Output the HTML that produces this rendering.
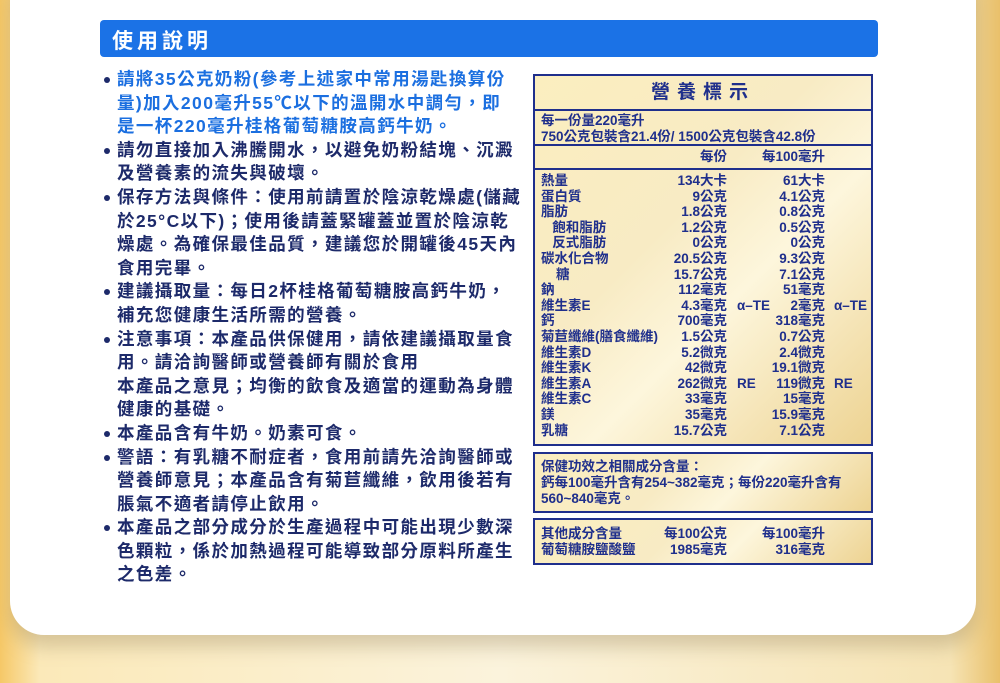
<!DOCTYPE html>
<html><head><meta charset="utf-8"><style>
*{margin:0;padding:0;box-sizing:border-box}
body{width:1000px;height:683px;overflow:hidden;position:relative;font-family:"Liberation Sans","Noto Sans CJK TC",sans-serif;
background:linear-gradient(90deg,#f6c867 0%,#fbe9b9 4%,#fbf3dc 50%,#f6e4b5 95%,#e9c06a 100%)}
.card{position:absolute;left:10px;top:-40px;width:966px;height:675px;background:#fff;border-radius:34px;box-shadow:0 12px 18px rgba(150,130,90,.35)}
.bar{position:absolute;left:100px;top:20px;width:778px;height:37px;background:#1b72e6;border-radius:4px;color:#fff;font-size:21px;font-weight:bold;letter-spacing:4px;padding:5px 0 0 12px}
.txt{position:absolute;left:100px;top:68px;font-size:17.5px;line-height:23.6px;color:#1d2a6a;white-space:nowrap;font-weight:bold;letter-spacing:1.4px}
.txt div{padding-left:17px;position:relative}
.txt div.b:before{content:"";position:absolute;left:4px;top:9px;width:6px;height:6px;border-radius:50%;background:#1d2a6a}
.txt .blue{color:#1b6fe0}
.box{position:absolute;left:533px;width:340px;border:2px solid #1f2f8c;background:linear-gradient(135deg,#fbeebf 0%,#f8ebc4 40%,#fdf6dc 60%,#edd392 100%);color:#1f2f8c;font-weight:bold;font-size:13.5px}
.sec{border-bottom:2px solid #1f2f8c;position:relative}
.r{position:relative;height:15.6px;line-height:15.6px}
.r span{position:absolute;top:0}
.l{left:6px}.a{right:144px;text-align:right}.c{right:46px;text-align:right}
.ua{left:202px}.uc{left:299px}
</style></head><body>
<div class="card"></div>
<div class="bar">使用說明</div>
<div class="txt">
<div class="b blue">請將35公克奶粉(參考上述家中常用湯匙換算份</div>
<div class="blue">量)加入200毫升55℃以下的溫開水中調勻，即</div>
<div class="blue">是一杯220毫升桂格葡萄糖胺高鈣牛奶。</div>
<div class="b">請勿直接加入沸騰開水，以避免奶粉結塊、沉澱</div>
<div>及營養素的流失與破壞。</div>
<div class="b">保存方法與條件：使用前請置於陰涼乾燥處(儲藏</div>
<div>於25°C以下)；使用後請蓋緊罐蓋並置於陰涼乾</div>
<div>燥處。為確保最佳品質，建議您於開罐後45天內</div>
<div>食用完畢。</div>
<div class="b">建議攝取量：每日2杯桂格葡萄糖胺高鈣牛奶，</div>
<div>補充您健康生活所需的營養。</div>
<div class="b">注意事項：本產品供保健用，請依建議攝取量食</div>
<div>用。請洽詢醫師或營養師有關於食用</div>
<div>本產品之意見；均衡的飲食及適當的運動為身體</div>
<div>健康的基礎。</div>
<div class="b">本產品含有牛奶。奶素可食。</div>
<div class="b">警語：有乳糖不耐症者，食用前請先洽詢醫師或</div>
<div>營養師意見；本產品含有菊苣纖維，飲用後若有</div>
<div>脹氣不適者請停止飲用。</div>
<div class="b">本產品之部分成分於生產過程中可能出現少數深</div>
<div>色顆粒，係於加熱過程可能導致部分原料所產生</div>
<div>之色差。</div>
</div>

<div class="box" style="top:74px;height:372px">
<div class="sec" style="height:35px;text-align:center;font-size:19px;line-height:33px;letter-spacing:7px">營養標示</div>
<div class="sec" style="height:35px;padding:2px 0 0 6px;line-height:15.5px">每一份量220毫升<br>750公克包裝含21.4份/ 1500公克包裝含42.8份</div>
<div class="sec" style="height:24px"><div class="r" style="top:3px"><span class="a">每份</span><span class="c">每100毫升</span></div></div>
<div style="padding-top:3px">
<div class="r"><span class="l">熱量</span><span class="a">134大卡</span><span class="c">61大卡</span></div>
<div class="r"><span class="l">蛋白質</span><span class="a">9公克</span><span class="c">4.1公克</span></div>
<div class="r"><span class="l">脂肪</span><span class="a">1.8公克</span><span class="c">0.8公克</span></div>
<div class="r"><span class="l">&nbsp;&nbsp;&nbsp;飽和脂肪</span><span class="a">1.2公克</span><span class="c">0.5公克</span></div>
<div class="r"><span class="l">&nbsp;&nbsp;&nbsp;反式脂肪</span><span class="a">0公克</span><span class="c">0公克</span></div>
<div class="r"><span class="l">碳水化合物</span><span class="a">20.5公克</span><span class="c">9.3公克</span></div>
<div class="r"><span class="l">&nbsp;&nbsp;&nbsp;&nbsp;糖</span><span class="a">15.7公克</span><span class="c">7.1公克</span></div>
<div class="r"><span class="l">鈉</span><span class="a">112毫克</span><span class="c">51毫克</span></div>
<div class="r"><span class="l">維生素E</span><span class="a">4.3毫克</span><span class="ua">α–TE</span><span class="c">2毫克</span><span class="uc">α–TE</span></div>
<div class="r"><span class="l">鈣</span><span class="a">700毫克</span><span class="c">318毫克</span></div>
<div class="r"><span class="l">菊苣纖維(膳食纖維)</span><span class="a">1.5公克</span><span class="c">0.7公克</span></div>
<div class="r"><span class="l">維生素D</span><span class="a">5.2微克</span><span class="c">2.4微克</span></div>
<div class="r"><span class="l">維生素K</span><span class="a">42微克</span><span class="c">19.1微克</span></div>
<div class="r"><span class="l">維生素A</span><span class="a">262微克</span><span class="ua">RE</span><span class="c">119微克</span><span class="uc">RE</span></div>
<div class="r"><span class="l">維生素C</span><span class="a">33毫克</span><span class="c">15毫克</span></div>
<div class="r"><span class="l">鎂</span><span class="a">35毫克</span><span class="c">15.9毫克</span></div>
<div class="r"><span class="l">乳糖</span><span class="a">15.7公克</span><span class="c">7.1公克</span></div>
</div>
</div>

<div class="box" style="top:452px;height:61px;padding:5px 0 0 6px;line-height:16px">保健功效之相關成分含量：<br>鈣每100毫升含有254~382毫克；每份220毫升含有<br>560~840毫克。</div>

<div class="box" style="top:518px;height:47px;padding-top:6px">
<div class="r"><span class="l">其他成分含量</span><span class="a">每100公克</span><span class="c">每100毫升</span></div>
<div class="r"><span class="l">葡萄糖胺鹽酸鹽</span><span class="a">1985毫克</span><span class="c">316毫克</span></div>
</div>
</body></html>
